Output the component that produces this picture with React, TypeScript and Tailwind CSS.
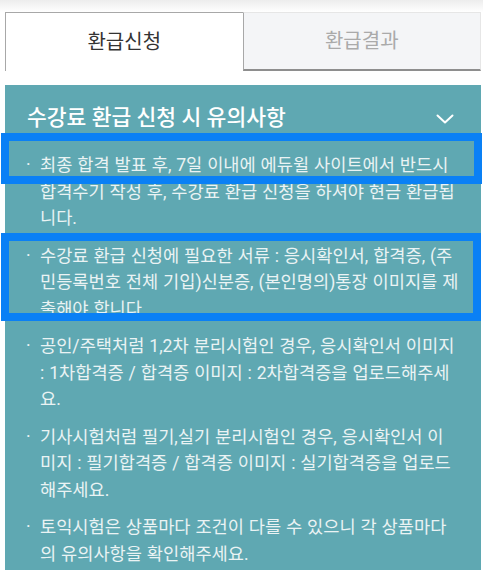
import { useState } from "react";

// lines are kept as they wrap in the app
const notices: string[][] = [
	[
		"최종 합격 발표 후, 7일 이내에 에듀윌 사이트에서 반드시",
		"합격수기 작성 후, 수강료 환급 신청을 하셔야 현금 환급됩",
		"니다.",
	],
	[
		"수강료 환급 신청에 필요한 서류 : 응시확인서, 합격증, (주",
		"민등록번호 전체 기입)신분증, (본인명의)통장 이미지를 제",
		"출해야 합니다.",
	],
	[
		"공인/주택처럼 1,2차 분리시험인 경우, 응시확인서 이미지",
		": 1차합격증 / 합격증 이미지 : 2차합격증을 업로드해주세",
		"요.",
	],
	[
		"기사시험처럼 필기,실기 분리시험인 경우, 응시확인서 이",
		"미지 : 필기합격증 / 합격증 이미지 : 실기합격증을 업로드",
		"해주세요.",
	],
	[
		"토익시험은 상품마다 조건이 다를 수 있으니 각 상품마다",
		"의 유의사항을 확인해주세요.",
	],
];

export default function App() {
	const [tab, setTab] = useState<"apply" | "result">("apply");
	const [isOpen, setIsOpen] = useState(true);

	return (
		<div
			className="relative h-[570px] flex flex-col bg-white overflow-hidden"
			style={{ fontFamily: 'Roboto, "Noto Sans CJK KR", sans-serif' }}
		>
			{/* header shadow */}
			<div className="h-[12px] shrink-0 bg-gradient-to-b from-[#ededed] to-white" />

			<div className="ml-[5px] mr-[2px] flex-1 flex flex-col">
				{/* Tabs */}
				<div className="flex h-[59px] shrink-0">
					<button
						onClick={() => setTab("apply")}
						className={`flex-1 flex items-center justify-center text-[20px] ${
							tab === "apply"
								? "bg-white text-[#333] border-l border-t border-[#a8a8a8]"
								: "bg-[#f4f5f7] text-[#aaa] border-t border-[#e4e4e4] border-b-2 border-b-[#8e8e8e]"
						}`}
					>
						환급신청
					</button>
					<button
						onClick={() => setTab("result")}
						className={`flex-1 flex items-center justify-center text-[20px] border-l border-l-[#a8a8a8] ${
							tab === "result"
								? "bg-white text-[#333] border-t border-r border-[#a8a8a8]"
								: "bg-[#f4f5f7] text-[#aaa] border-t border-t-[#e6e6e6] border-r border-r-[#e6e6e6] border-b-2 border-b-[#8e8e8e]"
						}`}
					>
						환급결과
					</button>
				</div>

				{/* Notice panel */}
				<div className="mt-[14px] flex-1 bg-[#5fa8b2]">
					<button
						onClick={() => setIsOpen(!isOpen)}
						className="w-full h-[67px] flex items-center justify-between pl-[22px] pr-[27px] text-white"
					>
						<span className="text-[21.5px] font-medium">수강료 환급 신청 시 유의사항</span>
						<svg width="18" height="10" viewBox="0 0 18 10" fill="none">
							<polyline
								points="1.5,1.5 9,8.5 16.5,1.5"
								stroke="white"
								strokeWidth="2"
								strokeLinecap="round"
								strokeLinejoin="round"
							/>
						</svg>
					</button>

					{isOpen && (
						<ul className="flex flex-col gap-[11px] pl-[21px] pr-[17px]">
							{notices.map((lines, i) => (
								<li
									key={i}
									className="flex text-[17.6px] leading-[26.5px] text-[#eaf3f4] [word-spacing:0.5px]"
								>
									<span className="w-[14px] shrink-0 text-left">·</span>
									<span className="flex flex-col whitespace-nowrap">
										{lines.map((line, j) => (
											<span key={j}>{line}</span>
										))}
									</span>
								</li>
							))}
						</ul>
					)}
				</div>
			</div>

			{/* highlight boxes */}
			<div className="absolute left-[1px] top-[133px] w-[481px] h-[51px] border-[8px] border-[#0a80f5]" />
			<div className="absolute left-[1px] top-[233px] w-[480px] h-[88px] border-[8px] border-[#0a80f5]" />
		</div>
	);
}
